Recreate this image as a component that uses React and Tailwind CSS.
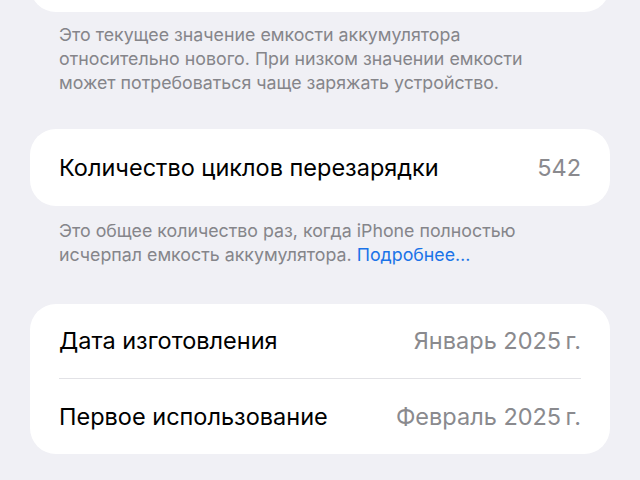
// iOS battery info screen (grouped settings list)

export default function App() {
  return (
    <div className="w-[640px] h-[480px] overflow-hidden bg-[#f0f0f5] font-['Inter','Liberation_Sans',sans-serif]">
      {/* tail of the card above, cut off by the top edge */}
      <div className="mx-[30px] -mt-[30px] h-[42px] bg-white rounded-b-[26px]" />

      <p className="mt-[11px] pl-[59px] pr-[64px] text-[17.8px] leading-[24px] text-[#85858a]">
        Это текущее значение емкости аккумулятора относительно нового. При низком значении емкости
        может потребоваться чаще заряжать устройство.
      </p>

      {/* cycle count */}
      <div className="mx-[30px] mt-[34px] h-[77px] bg-white rounded-[26px] px-[29px] flex items-center justify-between">
        <span className="text-[23.5px] text-black">Количество циклов перезарядки</span>
        <span className="text-[23.5px] text-[#8a8a8e]">542</span>
      </div>

      <p className="mt-[13px] pl-[59px] pr-[64px] text-[17.8px] leading-[24px] text-[#85858a]">
        Это общее количество раз, когда iPhone полностью исчерпал емкость аккумулятора.{' '}
        <span className="text-[#1a73e8]">Подробнее…</span>
      </p>

      {/* dates */}
      <div className="mx-[30px] mt-[37px] bg-white rounded-[26px] px-[29px]">
        <div className="h-[75px] flex items-center justify-between border-b border-[#e2e2e6]">
          <span className="text-[23.5px] text-black">Дата изготовления</span>
          <span className="text-[23.5px] text-[#8a8a8e]">Январь 2025{'\u2009'}г.</span>
        </div>
        <div className="h-[75px] flex items-center justify-between">
          <span className="text-[23.5px] text-black">Первое использование</span>
          <span className="text-[23.5px] text-[#8a8a8e]">Февраль 2025{'\u2009'}г.</span>
        </div>
      </div>
    </div>
  )
}
